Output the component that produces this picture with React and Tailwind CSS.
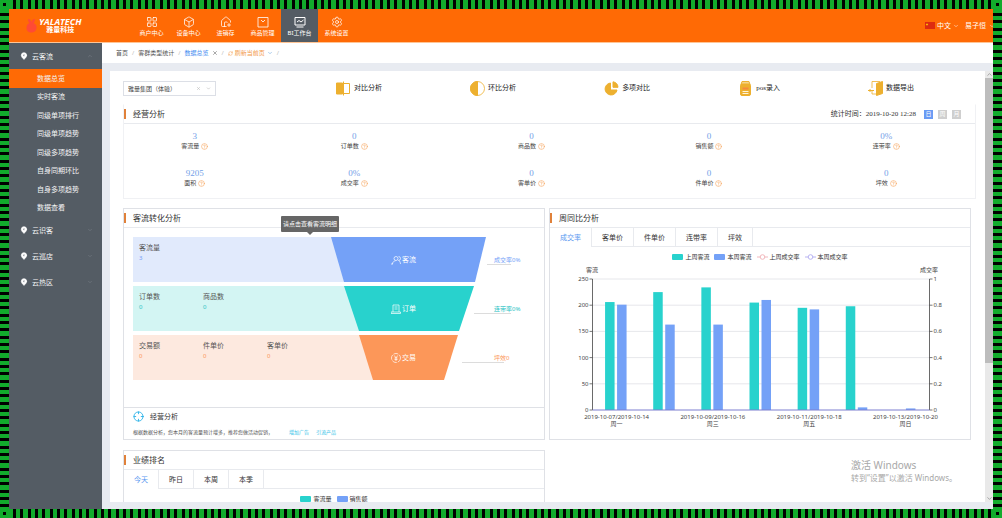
import {
  Box,
  ChevronDown,
  ChevronUp,
  CircleHelp,
  Crosshair,
  HousePlus,
  LayoutGrid,
  MapPin,
  RefreshCw,
  Settings,
  ShoppingBag,
  X,
} from 'lucide-react'

const NAV = [
  { label: '商户中心', icon: LayoutGrid },
  { label: '设备中心', icon: Box },
  { label: '进销存', icon: HousePlus },
  { label: '商品管理', icon: GoodsIcon },
  { label: 'BI工作台', icon: BoardIcon, active: true },
  { label: '系统设置', icon: Settings },
]

const MENU = ['数据总览', '实时客流', '同级单项排行', '同级单项趋势', '同级多项趋势', '自身同期环比', '自身多项趋势', '数据查看']
const GROUPS = ['云识客', '云巡店', '云热区']

const STATS = [
  ['客流量', '3'],
  ['订单数', '0'],
  ['商品数', '0'],
  ['销售额', '0'],
  ['连带率', '0%'],
  ['面积', '9205'],
  ['成交率', '0%'],
  ['客单价', '0'],
  ['件单价', '0'],
  ['坪效', '0'],
]

const FUNNEL = [
  {
    label: '客流', icon: 'user', rate: '成交率0%',
    light: '#e1eafc', dark: '#74a1f7', bg: 'bg-[#e1eafc]', text: 'text-[#74a1f7]',
    edge: '0,0 155,0 144,45 13,45', line: [156, 180],
    items: [['客流量', '3']],
  },
  {
    label: '订单', icon: 'order', rate: '连带率0%',
    light: '#d3f5f3', dark: '#28d2cd', bg: 'bg-[#d3f5f3]', text: 'text-[#28c2c4]',
    edge: '13,0 143,0 128,45 28,45', line: [143, 180],
    items: [['订单数', '0'], ['商品数', '0']],
  },
  {
    label: '交易', icon: 'money', rate: '坪效0',
    light: '#fde9df', dark: '#fc9759', bg: 'bg-[#fde9df]', text: 'text-[#fc9759]',
    edge: '28,0 127,0 113,45 42,45', line: [131, 173],
    items: [['交易额', '0'], ['件单价', '0'], ['客单价', '0']],
  },
]

const WEEK = [
  { last: 206, current: 201, date: '2019-10-07/2019-10-14', day: '周一' },
  { last: 225, current: 163 },
  { last: 234, current: 163, date: '2019-10-09/2019-10-16', day: '周三' },
  { last: 205, current: 210 },
  { last: 195, current: 192, date: '2019-10-11/2019-10-18', day: '周五' },
  { last: 198, current: 5 },
  { last: 0, current: 3, date: '2019-10-13/2019-10-20', day: '周日' },
]

function GoodsIcon({ className }) {
  return (
    <svg viewBox="0 0 12 12" className={className} fill="none" stroke="currentColor" strokeWidth=".8">
      <path d="M1 1.500h10v9.500H1zM4 4l2 2 2-2" />
    </svg>
  )
}

function BoardIcon({ className }) {
  return (
    <svg viewBox="0 0 12 12" className={className} fill="none" stroke="currentColor">
      <path d="M1 1.500h10v7.500H1zM2.500 11h7M3 6l2-1.500L7 6l2.500-2" />
    </svg>
  )
}

function Header() {
  return (
    <header className="flex h-[34px] shrink-0 border-b border-[#ffc595] bg-[#ff6a05] text-white">
      <div className="flex w-[124px] items-center gap-[2px] pl-[17px]">
        <svg viewBox="0 0 11 15" className="h-[15px] w-[11px]" fill="#ff4a35">
          <path d="M2 1c2 0 3 1 3.500 3C6 2 7 1 9 1c0 2-.5 3-1.500 4C10 6 11 8 10.500 10.500S8 14.500 5.500 14.500.5 13 .5 10.500 1 6 3.500 5C2.500 4 2 3 2 1z" />
        </svg>
        <div className="flex flex-col items-center">
          <span className="font-['Open_Sans',sans-serif] text-[9px] leading-[9px] font-bold italic">YALATECH</span>
          <span className="text-[7px] leading-[8px] font-bold">雅量科技</span>
        </div>
      </div>
      <nav className="flex">
        {NAV.map(({ label, icon: Icon, active }) => (
          <a
            key={label}
            href="#"
            aria-current={active ? 'page' : undefined}
            className={`flex w-[37px] flex-col items-center justify-center gap-[1px] pt-[2px] ${active ? 'bg-[#545c64]' : ''}`}
          >
            <Icon className="size-[12px]" strokeWidth={1.5} />
            <span className="text-[6px] leading-[8px]">{label}</span>
          </a>
        ))}
      </nav>
      <div className="ml-auto flex items-center gap-[6px] text-[7px] leading-[9px]">
        <button className="flex items-center gap-[2px]">
          <svg viewBox="0 0 10 7" className="h-[7px] w-[10px]">
            <rect width="10" height="7" fill="#de2b10" />
            <path d="M2 1l.4 1h1l-.8.6.3 1L2 3l-.9.600.3-1L.6 2h1z" fill="#ffde00" />
          </svg>
          中文
          <ChevronDown className="size-[6px]" />
        </button>
        <button className="flex items-center gap-[3px] overflow-hidden">
          易子恒
          <ChevronDown className="-mr-[2px] size-[6px]" />
        </button>
      </div>
    </header>
  )
}

function Sidebar() {
  return (
    <aside className="w-[93px] shrink-0 bg-[#545c64] text-[7px] leading-[9px] text-[#f4f5f6]">
      <GroupTitle label="云客流" open />
      <ul className="grid h-[148px] auto-rows-fr">
        {MENU.map((item, i) => (
          <li key={item} className="flex">
            <a href="#" className={`flex w-full items-center pl-[28px] ${i === 0 ? 'bg-[#ff6a05]' : ''}`}>
              {item}
            </a>
          </li>
        ))}
      </ul>
      {GROUPS.map((label) => (
        <GroupTitle key={label} label={label} />
      ))}
    </aside>
  )
}

function GroupTitle({ label, open }) {
  const Arrow = open ? ChevronUp : ChevronDown
  return (
    <button className="flex h-[26px] w-full items-center pr-[9px] pl-[11px]" aria-expanded={!!open}>
      <MapPin className="mr-[4px] size-[8px] fill-white stroke-white [&>circle]:fill-[#545c64]" />
      {label}
      <Arrow className="ml-auto size-[6px] text-[#7c838a]" />
    </button>
  )
}

function Breadcrumb() {
  return (
    <nav className="flex h-[20px] shrink-0 items-center gap-[4px] bg-white pl-[14px] text-[6px] leading-[8px] text-[#555]">
      <a href="#">首页</a>
      <span className="text-[#bbb]">/</span>
      <a href="#">客群类型统计</a>
      <span className="text-[#bbb]">/</span>
      <a href="#" className="flex items-center gap-[3px] text-[#3f8bf0]">
        数据总览
        <X className="size-[6px] text-[#555]" />
      </a>
      <span className="text-[#bbb]">/</span>
      <button className="flex items-center gap-[2px] text-[#f2994a]">
        <RefreshCw className="size-[5px]" />
        刷新当前页
        <ChevronDown className="size-[6px] text-[#5a9bd8]" />
      </button>
      <span className="text-[#bbb]">/</span>
    </nav>
  )
}

function ToolIcon({ name }) {
  return (
    <svg viewBox="0 0 15 15" className="size-[15px]" fill="#edb02f" stroke="#edb02f">
      {name === 'compare' && (
        <>
          <path d="M.5 2h6v11h-6z" />
          <path d="M7.500.5v14" />
          <path d="M8 2.500h5.500v10H8" fill="none" />
        </>
      )}
      {name === 'half' && (
        <>
          <circle cx="7.500" cy="7.500" r="7" fill="none" strokeWidth=".8" />
          <path d="M7.500.5a7 7 0 0 0 0 14z" />
        </>
      )}
      {name === 'pie' && (
        <>
          <path d="M6.500 2a6 6 0 1 0 6.500 7H6.500z" />
          <path d="M9 .8A6 6 0 0 1 14 6.300H9z" />
        </>
      )}
      {name === 'pos' && (
        <>
          <path d="M4 .5h7l1 3H3z" fill="#f6d58b" />
          <rect x="2.500" y="3" width="10" height="11.500" rx="1.500" />
          <path d="M4.500 6.500h6v2h-6z" fill="#f58a3c" stroke="none" />
          <path d="M4.500 10.500h6M4.500 12.500h6" stroke="#fff3d6" />
        </>
      )}
      {name === 'export' && (
        <>
          <path d="M4 7V.5h8M4 10v3h4" fill="none" strokeWidth=".8" />
          <path d="M8.500 2.500l6-2v12l-6 2z" />
          <path d="M0 9.500h6M2 8v3" fill="none" />
        </>
      )}
    </svg>
  )
}

const TOOLS = [
  ['compare', '对比分析'],
  ['half', '环比分析'],
  ['pie', '多项对比'],
  ['pos', 'pos录入'],
  ['export', '数据导出'],
]

function Toolbar() {
  return (
    <div className="flex items-center pr-[71px]">
      <div className="flex h-[15px] w-[93px] shrink-0 items-center border border-[#dcdfe6] pr-[4px] pl-[4px]">
        <select aria-label="集团" className="min-w-0 flex-1 appearance-none text-[6px] leading-[8px] text-[#444] outline-none">
          <option>雅量集团（体验）</option>
        </select>
        <X className="size-[5px] text-[#aaa]" />
        <ChevronDown className="ml-[5px] size-[5px] text-[#999]" />
      </div>
      <div className="flex flex-1 justify-between pl-[120px]">
        {TOOLS.map(([icon, label]) => (
          <button key={icon} className="flex items-center gap-[3px] font-['Liberation_Serif','Noto_Sans_CJK_SC',serif] text-[7px] leading-[9px] text-[#222]">
            <ToolIcon name={icon} />
            {label}
          </button>
        ))}
      </div>
    </div>
  )
}

function CardTitle({ children, extra }) {
  return (
    <div className="flex h-[19px] items-center border-b border-[#e8eaee]">
      <span className="h-[10px] w-[2px] bg-[#e0813a]" />
      <h2 className="ml-[7px] text-[8px] leading-[10px] text-[#333]">{children}</h2>
      {extra}
    </div>
  )
}

function Overview() {
  return (
    <section className="mr-[9px] border border-[#f0f1f4] border-t-transparent">
      <CardTitle
        extra={
          <div className="ml-auto flex items-center gap-[5px] pr-[14px]">
            <span className="mr-[3px] font-['Liberation_Serif','Noto_Sans_CJK_SC',serif] text-[7px] leading-[9px] text-[#333]">
              统计时间：2019-10-20 12:28
            </span>
            <PeriodButton label="日" active />
            <PeriodButton label="周" />
            <PeriodButton label="月" />
          </div>
        }
      >
        经营分析
      </CardTitle>
      <dl className="grid grid-cols-[142fr_178fr_178fr_178fr_178fr] gap-y-[17px] pt-[6px] pb-[11px]">
        {STATS.map(([label, value]) => (
          <div key={label} className="flex flex-col-reverse items-center">
            <dt className="flex items-center gap-[2px] text-[6px] leading-[8px] text-[#444]">
              {label}
              <CircleHelp className="size-[7px] text-[#f7a35c]" />
            </dt>
            <dd className="font-['Liberation_Serif',serif] text-[9px] leading-[12px] text-[#74a1e8]">{value}</dd>
          </div>
        ))}
      </dl>
    </section>
  )
}

function PeriodButton({ label, active }) {
  return (
    <button className={`size-[9px] text-center text-[6px] leading-[8px] text-white ${active ? 'bg-[#6a9bf4]' : 'bg-[#cfcfcf]'}`}>
      {label}
    </button>
  )
}

function FunnelIcon({ name }) {
  return (
    <svg viewBox="0 0 10 10" className="size-[10px]" fill="none" stroke="#fff" strokeWidth=".7">
      {name === 'user' && <path d="M5 5.500a2 2 0 1 0-2-2 2 2 0 0 0 2 2zM1.500 9c0-2 1.500-3 3-3.200M7.500 1.500a2 2 0 0 1 0 4c1.200.4 1.800 1.500 2 3.500M0 9h2" />}
      {name === 'order' && <path d="M2 8V1h6v7M3.500 3h3M3.500 5h3M0 8h9.500v1.500H0z" />}
      {name === 'money' && (
        <>
          <circle cx="5" cy="5" r="4.500" strokeDasharray="5 1" />
          <path d="M3.300 2.500L5 5l1.700-2.500M5 5v3M3.500 5h3M3.500 6.500h3" />
        </>
      )}
    </svg>
  )
}

function FunnelRow({ row }) {
  return (
    <div className="flex h-[45px] pr-[23px]">
      <dl className={`flex flex-1 pt-[6px] pl-[6px] text-[7px] leading-[10px] ${row.bg}`}>
        {row.items.map(([label, value]) => (
          <div key={label} className="w-[64px]">
            <dt className="text-[#555]">{label}</dt>
            <dd className={`text-[6px] ${row.text}`}>{value}</dd>
          </div>
        ))}
      </dl>
      <div className="grid w-[190px] items-center">
        <svg viewBox="0 0 190 45" className="col-start-1 row-start-1 h-[45px] w-[190px]">
          <path d="M0 0h60v45H0z" fill={row.light} />
          <polygon points={row.edge} fill={row.dark} />
          <path d={`M${row.line[0]} 27.500H${row.line[1]}`} stroke="#dcdcdc" />
        </svg>
        <span className="col-start-1 row-start-1 flex items-center gap-px pl-[60px] text-[7px] leading-[9px] text-white">
          <FunnelIcon name={row.icon} />
          {row.label}
        </span>
        <span className={`col-start-1 row-start-1 pl-[163px] text-[6px] leading-[8px] whitespace-nowrap ${row.text}`}>{row.rate}</span>
      </div>
    </div>
  )
}

function FunnelCard() {
  return (
    <section className="relative flex flex-col border border-[#dfe1e6]">
      <CardTitle>客流转化分析</CardTitle>
      <div className="flex flex-col gap-[4px] pt-[9px] pl-[9px]">
        {FUNNEL.map((row) => (
          <FunnelRow key={row.label} row={row} />
        ))}
      </div>
      <div className="absolute top-[7px] left-[157px] flex flex-col items-center">
        <div role="tooltip" className="rounded-[1px] bg-[#666] px-[2px] py-[4px] text-[6px] leading-[8px] whitespace-nowrap text-white">
          请点击查看客流明细
        </div>
        <svg viewBox="0 0 6 3" className="h-[3px] w-[6px]" fill="#666">
          <path d="M0 0h6L3 3z" />
        </svg>
      </div>
      <div className="mt-auto border-t border-[#dfe1e6] px-[9px] pt-[3px] pb-[3px]">
        <h3 className="flex items-center gap-[6px] text-[7px] leading-[10px] text-[#333]">
          <Crosshair className="size-[11px] text-[#2fb4e8]" />
          经营分析
        </h3>
        <p className="mt-[6px] text-[5px] leading-[8px] text-[#555]">
          根据数据分析，您本月的客流量预计增多，推荐您做活动促销，
          <a href="#" className="ml-[16px] text-[#35bfe8]">增加广告</a>
          <a href="#" className="ml-[7px] text-[#35bfe8]">引流产品</a>
        </p>
      </div>
    </section>
  )
}

function Tabs({ items }) {
  return (
    <div role="tablist" className="flex h-[19px] border-b border-[#e8eaee]">
      {items.map((item, i) => (
        <button
          key={item}
          role="tab"
          aria-selected={i === 0}
          className={`-mb-px h-[19px] border-r border-[#e8eaee] px-[10px] text-[7px] leading-[9px] ${
            i === 0 ? 'bg-white text-[#5b98f0]' : 'border-b text-[#333]'
          }`}
        >
          {item}
        </button>
      ))}
    </div>
  )
}

function Legend({ items }) {
  return (
    <ul className="flex items-center justify-center gap-[5px] text-[6px] leading-[8px] text-[#333]">
      {items.map(([label, shape]) => (
        <li key={label} className="flex items-center gap-[2px]">
          {shape === 'teal' && <span className="h-[6px] w-[11px] rounded-[1px] bg-[#28d2cd]" />}
          {shape === 'blue' && <span className="h-[6px] w-[11px] rounded-[1px] bg-[#74a1f7]" />}
          {shape === 'pink-line' && <LineMark color="#f2b8bd" />}
          {shape === 'violet-line' && <LineMark color="#b9b4f2" />}
          {label}
        </li>
      ))}
    </ul>
  )
}

function LineMark({ color }) {
  return (
    <svg viewBox="0 0 11 6" className="h-[6px] w-[11px]" fill="#fff" stroke={color}>
      <path d="M0 3h11" />
      <circle cx="5.500" cy="3" r="2.300" />
    </svg>
  )
}

function WeekChart() {
  const left = 42.500
  const right = 379.500
  const bottom = 148
  const height = 131
  const step = (right - left) / WEEK.length
  return (
    <svg
      viewBox="0 0 420 177"
      className="w-full font-['Noto_Sans','Noto_Sans_CJK_SC',sans-serif] text-[6px]"
      fill="#444"
    >
      <text x="42" y="10" textAnchor="middle">客流</text>
      <text x="379" y="10" textAnchor="middle">成交率</text>
      {[0, 1, 2, 3, 4, 5].map((i) => {
        const y = bottom - (i * height) / 5
        return (
          <g key={i}>
            {i > 0 && <path d={`M${left} ${y}H${right}`} stroke="#dfe1e6" strokeWidth=".8" />}
            <path d={`M${left - 3} ${y}h3M${right} ${y}h3`} stroke="#555" strokeWidth=".8" />
            <text x={left - 4} y={y + 2} textAnchor="end">{i * 50}</text>
            <text x={right + 4} y={y + 2}>{i / 5}</text>
          </g>
        )
      })}
      {WEEK.map((w, i) => {
        const x = left + step * (i + 0.5)
        const last = (w.last / 250) * height
        const current = (w.current / 250) * height
        return (
          <g key={i}>
            <rect x={x - 11.500} y={bottom - last} width="9.500" height={last} fill="#28d2cd" />
            <rect x={x + 0.5} y={bottom - current} width="9.500" height={current} fill="#74a1f7" />
            {w.date && (
              <>
                <text x={x} y={bottom + 9} textAnchor="middle">{w.date}</text>
                <text x={x} y={bottom + 16} textAnchor="middle">{w.day}</text>
              </>
            )}
          </g>
        )
      })}
      <path d={`M${left} ${bottom - height}V${bottom}M${right} ${bottom - height}V${bottom}`} stroke="#444" strokeWidth=".8" />
      <path d={`M${left} ${bottom}H${right}`} stroke="#7d7fd0" />
    </svg>
  )
}

function CompareCard() {
  return (
    <section className="border border-[#dfe1e6]">
      <CardTitle>周同比分析</CardTitle>
      <Tabs items={['成交率', '客单价', '件单价', '连带率', '坪效']} />
      <div className="pt-[6px] pb-[1px]">
        <Legend
          items={[
            ['上周客流', 'teal'],
            ['本周客流', 'blue'],
            ['上周成交率', 'pink-line'],
            ['本周成交率', 'violet-line'],
          ]}
        />
      </div>
      <WeekChart />
    </section>
  )
}

function RankCard() {
  return (
    <section className="border border-[#dfe1e6]">
      <CardTitle>业绩排名</CardTitle>
      <Tabs items={['今天', '昨日', '本周', '本季']} />
      <div className="h-[120px] pt-[6px]">
        <Legend
          items={[
            ['客流量', 'teal'],
            ['销售额', 'blue'],
          ]}
        />
      </div>
    </section>
  )
}

function Scrollbar() {
  return (
    <div className="flex w-[8px] shrink-0 flex-col items-center bg-[#e9e9e9] text-[#777]">
      <ChevronUp className="size-[7px]" />
      <div className="w-full flex-[285] bg-[#bdbdbd]" />
      <div className="flex-[132]" />
      <ChevronDown className="size-[7px]" />
    </div>
  )
}

function Corner() {
  return (
    <div className="grid place-items-center bg-[#12ab2c]">
      <span className="size-[3px] bg-black" />
    </div>
  )
}

const STRIPES_X =
  'bg-[repeating-linear-gradient(90deg,#12ab2c_0_4px,#000_4px_7px,#12ab2c_7px_11px,#000_11px_14px,#12ab2c_14px_19px,#000_19px_22px)]'
const STRIPES_Y =
  'bg-[repeating-linear-gradient(180deg,#12ab2c_0_4px,#000_4px_7px,#12ab2c_7px_11px,#000_11px_14px,#12ab2c_14px_19px,#000_19px_22px)]'

export default function App() {
  return (
    <div className="grid h-screen grid-cols-[9px_minmax(0,1fr)_9px] grid-rows-[9px_minmax(0,1fr)_9px] font-['Noto_Sans','Noto_Sans_CJK_SC',sans-serif]">
      <Corner />
      <div className={STRIPES_X} />
      <Corner />
      <div className={STRIPES_Y} />
      <div className="flex min-h-0 flex-col overflow-hidden bg-[#e8ebf1]">
        <Header />
        <div className="flex min-h-0 flex-1">
          <Sidebar />
          <div className="flex min-w-0 flex-1 flex-col">
            <Breadcrumb />
            <div className="flex min-h-0 flex-1 pt-[8px] pb-[7px] pl-[8px]">
              <main className="relative min-w-0 flex-1 overflow-hidden bg-white pt-[10px] pl-[13px]">
                <Toolbar />
                <div className="mt-[8px]">
                  <Overview />
                </div>
                <div className="mt-[9px] grid grid-cols-2 gap-x-[4px] gap-y-[10px] pr-[14px]">
                  <FunnelCard />
                  <CompareCard />
                  <RankCard />
                </div>
                <div className="absolute right-[28px] bottom-[19px] text-[#a8a8a8]">
                  <p className="text-[10px] leading-[14px]">激活 Windows</p>
                  <p className="text-[8px] leading-[11px]">转到“设置”以激活 Windows。</p>
                </div>
              </main>
              <Scrollbar />
            </div>
          </div>
        </div>
      </div>
      <div className={STRIPES_Y} />
      <Corner />
      <div className={STRIPES_X} />
      <Corner />
    </div>
  )
}
